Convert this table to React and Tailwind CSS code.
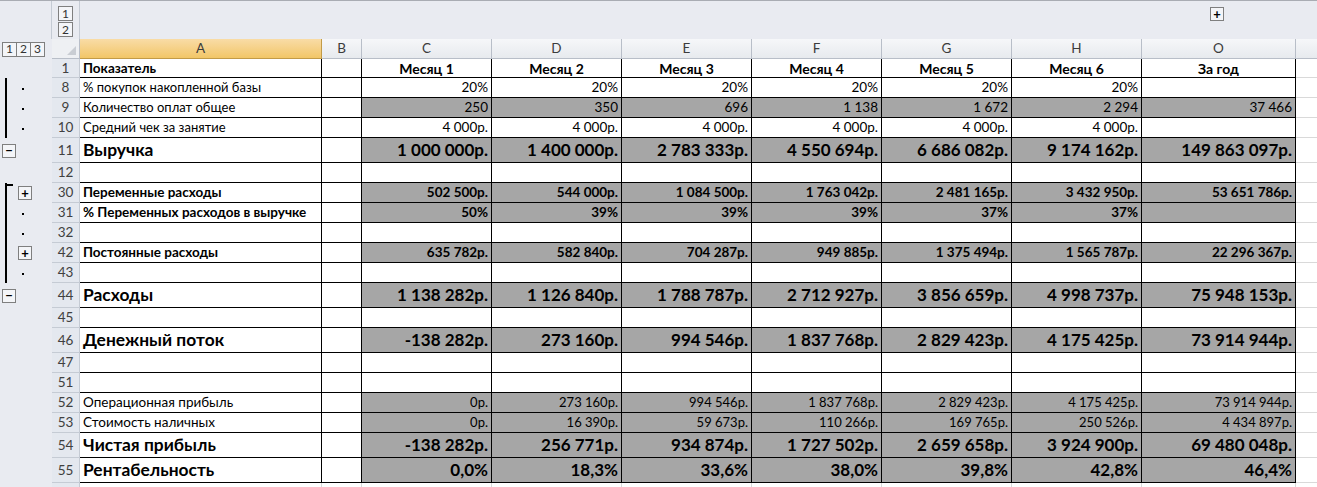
import React from 'react';

const COLS = ['C', 'D', 'E', 'F', 'G', 'H', 'O'];
const WIDTHS = ['w-[130px]', 'w-[130px]', 'w-[130px]', 'w-[130px]', 'w-[130px]', 'w-[130px]', 'w-[154px]'];

const rows = [
  { n: 1, h: 'h-[19px]', label: 'Показатель', kind: 'head', cells: ['Месяц 1', 'Месяц 2', 'Месяц 3', 'Месяц 4', 'Месяц 5', 'Месяц 6', 'За год'] },
  { n: 8, label: '% покупок накопленной базы', kind: 'norm', cells: ['20%', '20%', '20%', '20%', '20%', '20%', ''], outline: 'line', dot: true },
  { n: 9, label: 'Количество оплат общее', kind: 'norm', fill: true, cells: ['250', '350', '696', '1 138', '1 672', '2 294', '37 466'], outline: 'line', dot: true },
  { n: 10, label: 'Средний чек за занятие', kind: 'norm', cells: ['4 000р.', '4 000р.', '4 000р.', '4 000р.', '4 000р.', '4 000р.', ''], outline: 'line', dot: true },
  { n: 11, h: 'h-[25px]', label: 'Выручка', kind: 'big', fill: true, cells: ['1 000 000р.', '1 400 000р.', '2 783 333р.', '4 550 694р.', '6 686 082р.', '9 174 162р.', '149 863 097р.'], btn1: '−' },
  { n: 12, empty: true },
  { n: 30, label: 'Переменные расходы', kind: 'sub', fill: true, cells: ['502 500р.', '544 000р.', '1 084 500р.', '1 763 042р.', '2 481 165р.', '3 432 950р.', '53 651 786р.'], outline: 'bracketTop', btn2: '+' },
  { n: 31, label: '% Переменных расходов в выручке', kind: 'sub', fill: true, cells: ['50%', '39%', '39%', '39%', '37%', '37%', ''], outline: 'line', dot: true },
  { n: 32, empty: true, outline: 'line', dot: true },
  { n: 42, label: 'Постоянные расходы', kind: 'sub', fill: true, cells: ['635 782р.', '582 840р.', '704 287р.', '949 885р.', '1 375 494р.', '1 565 787р.', '22 296 367р.'], outline: 'line', btn2: '+' },
  { n: 43, empty: true, outline: 'line', dot: true },
  { n: 44, h: 'h-[25px]', label: 'Расходы', kind: 'big', fill: true, cells: ['1 138 282р.', '1 126 840р.', '1 788 787р.', '2 712 927р.', '3 856 659р.', '4 998 737р.', '75 948 153р.'], btn1: '−' },
  { n: 45, empty: true },
  { n: 46, h: 'h-[25px]', label: 'Денежный поток', kind: 'big', fill: true, cells: ['-138 282р.', '273 160р.', '994 546р.', '1 837 768р.', '2 829 423р.', '4 175 425р.', '73 914 944р.'] },
  { n: 47, empty: true },
  { n: 51, empty: true },
  { n: 52, label: 'Операционная прибыль', kind: 'small', fill: true, cells: ['0р.', '273 160р.', '994 546р.', '1 837 768р.', '2 829 423р.', '4 175 425р.', '73 914 944р.'] },
  { n: 53, label: 'Стоимость наличных', kind: 'small', fill: true, cells: ['0р.', '16 390р.', '59 673р.', '110 266р.', '169 765р.', '250 526р.', '4 434 897р.'] },
  { n: 54, h: 'h-[25px]', label: 'Чистая прибыль', kind: 'big', fill: true, cells: ['-138 282р.', '256 771р.', '934 874р.', '1 727 502р.', '2 659 658р.', '3 924 900р.', '69 480 048р.'] },
  { n: 55, h: 'h-[25px]', label: 'Рентабельность', kind: 'big', fill: true, cells: ['0,0%', '18,3%', '33,6%', '38,0%', '39,8%', '42,8%', '46,4%'] },
];

const labelCls = {
  head: 'text-[13.5px] font-bold',
  norm: 'text-[13px]',
  big: 'text-[17.4px] font-bold',
  sub: 'text-[13.5px] font-bold',
  small: 'text-[13.5px]',
};
const numCls = {
  head: 'text-[14px] font-bold justify-center',
  norm: 'text-[13.5px] justify-end',
  big: 'text-[17px] font-bold justify-end',
  sub: 'text-[13.5px] font-bold justify-end',
  small: 'text-[13px] justify-end',
};

const OutlineBox = ({ children }) => (
  <div className="w-[14px] h-[14px] border border-[#7f7f7f] bg-[#f4f5f8] flex items-center justify-center text-[13px] font-bold leading-none text-black">
    {children}
  </div>
);

// outline gutter for one row: group bracket, level dots and +/- buttons
const Outline = ({ r }) => (
  <div className="w-[52px] shrink-0 bg-[#e9ebf1] relative h-full">
    {(r.outline === 'line' || r.outline === 'bracketTop') && (
      <div className="absolute left-[5px] top-0 bottom-0 w-[2px] bg-black" />
    )}
    {r.n === 10 && <div className="absolute left-[5px] top-full h-[2px] w-[2px] bg-black" />}
    {r.outline === 'bracketTop' && <div className="absolute left-[5px] top-[1px] w-[8px] h-[2px] bg-black" />}
    {r.n === 43 && <div className="absolute left-[5px] top-full h-[3px] w-[2px] bg-black" />}
    {r.dot && <div className="absolute left-[22px] top-1/2 w-[2px] h-[2px] bg-black" />}
    {r.btn1 && (
      <div className="absolute left-[2px] top-1/2 -translate-y-1/2">
        <OutlineBox>{r.btn1}</OutlineBox>
      </div>
    )}
    {r.btn2 && (
      <div className="absolute left-[18px] top-1/2 -translate-y-1/2">
        <OutlineBox>{r.btn2}</OutlineBox>
      </div>
    )}
  </div>
);

const RowHead = ({ n }) => (
  <div className="w-[28px] shrink-0 h-full bg-[#e4e8ef] border-r border-b border-[#c5cbd4] flex items-center justify-center text-[13.5px] text-[#404040]">
    {n}
  </div>
);

const Row = ({ r }) => (
  <div className={`flex ${r.h || 'h-[20px]'} relative`}>
    <Outline r={r} />
    <RowHead n={r.n} />
    <div className={`w-[242px] shrink-0 h-full border-r border-b border-black bg-white flex items-center pl-[3px] whitespace-nowrap text-black ${r.empty ? '' : labelCls[r.kind]}`}>
      {r.label}
    </div>
    <div className="w-[40px] shrink-0 h-full border-r border-b border-black bg-white" />
    {COLS.map((c, i) => (
      <div
        key={c}
        className={`${WIDTHS[i]} shrink-0 h-full border-r border-b border-black flex items-center px-[3px] whitespace-nowrap text-black ${r.fill ? 'bg-[#a6a6a6]' : 'bg-white'} ${r.empty ? '' : numCls[r.kind]}`}
      >
        {r.empty ? '' : r.cells[i]}
      </div>
    ))}
    <div className="flex-1 h-full border-b border-[#d9d9d9] bg-white" />
  </div>
);

export default function App() {
  return (
    <div className="w-[1317px] h-[487px] overflow-hidden bg-white select-none" style={{ fontFamily: 'Lato, "Noto Sans", sans-serif' }}>
      {/* outline bar */}
      <div className="flex h-[39px] bg-[#e9ebf1] border-t border-[#a9acb3]">
        <div className="w-[52px] shrink-0 border-r border-[#c5cbd4]" />
        <div className="w-[28px] shrink-0 border-r border-[#c5cbd4] flex flex-col items-center pt-[5px] gap-[1px] text-[12px] leading-none">
          <div className="w-[15px] h-[15px] border border-[#7f7f7f] bg-[#f4f5f8] flex items-center justify-center text-[#333]">1</div>
          <div className="w-[15px] h-[15px] border border-[#7f7f7f] bg-[#f4f5f8] flex items-center justify-center text-[#333]">2</div>
        </div>
        <div className="flex-1 flex">
          <div className="w-[1130px] shrink-0" />
          <div className="mt-[6px]">
            <OutlineBox>+</OutlineBox>
          </div>
        </div>
      </div>
      {/* column headers */}
      <div className="flex h-[20px] text-[13.5px] text-[#3c3c3c]">
        <div className="w-[52px] shrink-0 bg-[#e9ebf1] flex items-center pl-[2px]">
          <div className="flex">
            {['1', '2', '3'].map((l) => (
              <div key={l} className="w-[15px] h-[15px] border border-[#7f7f7f] bg-[#f4f5f8] flex items-center justify-center text-[12px] leading-none text-[#333] -ml-px first:ml-0">
                {l}
              </div>
            ))}
          </div>
        </div>
        <div className="w-[28px] shrink-0 bg-[#eef0f3] border-r border-b border-[#b8bec8] relative">
          <div className="absolute right-[3px] bottom-[3px] w-0 h-0 border-l-[9px] border-l-transparent border-b-[9px] border-b-[#c9cdd3]" />
        </div>
        <div className="w-[242px] shrink-0 bg-gradient-to-b from-[#f9dca6] to-[#f2c666] border-r border-b border-[#c29b47] flex items-center justify-center">A</div>
        <div className="w-[40px] shrink-0 bg-gradient-to-b from-[#f6f7f9] to-[#e7eaee] border-r border-b border-[#b8bec8] flex items-center justify-center">B</div>
        {COLS.map((c, i) => (
          <div key={c} className={`${WIDTHS[i]} shrink-0 bg-gradient-to-b from-[#f6f7f9] to-[#e7eaee] border-r border-b border-[#b8bec8] flex items-center justify-center`}>
            {c}
          </div>
        ))}
        <div className="flex-1 bg-gradient-to-b from-[#f6f7f9] to-[#e7eaee] border-b border-[#b8bec8]" />
      </div>
      {rows.map((r) => (
        <Row key={r.n} r={r} />
      ))}
      <div className="flex h-[10px]">
        <div className="w-[52px] shrink-0 bg-[#e9ebf1]" />
        <div className="w-[28px] shrink-0 bg-[#e4e8ef] border-r border-[#c5cbd4]" />
        <div className="w-[242px] shrink-0 border-r border-[#d9d9d9]" />
        <div className="w-[40px] shrink-0 border-r border-[#d9d9d9]" />
        {COLS.map((c, i) => (
          <div key={c} className={`${WIDTHS[i]} shrink-0 border-r border-[#d9d9d9]`} />
        ))}
      </div>
    </div>
  );
}
